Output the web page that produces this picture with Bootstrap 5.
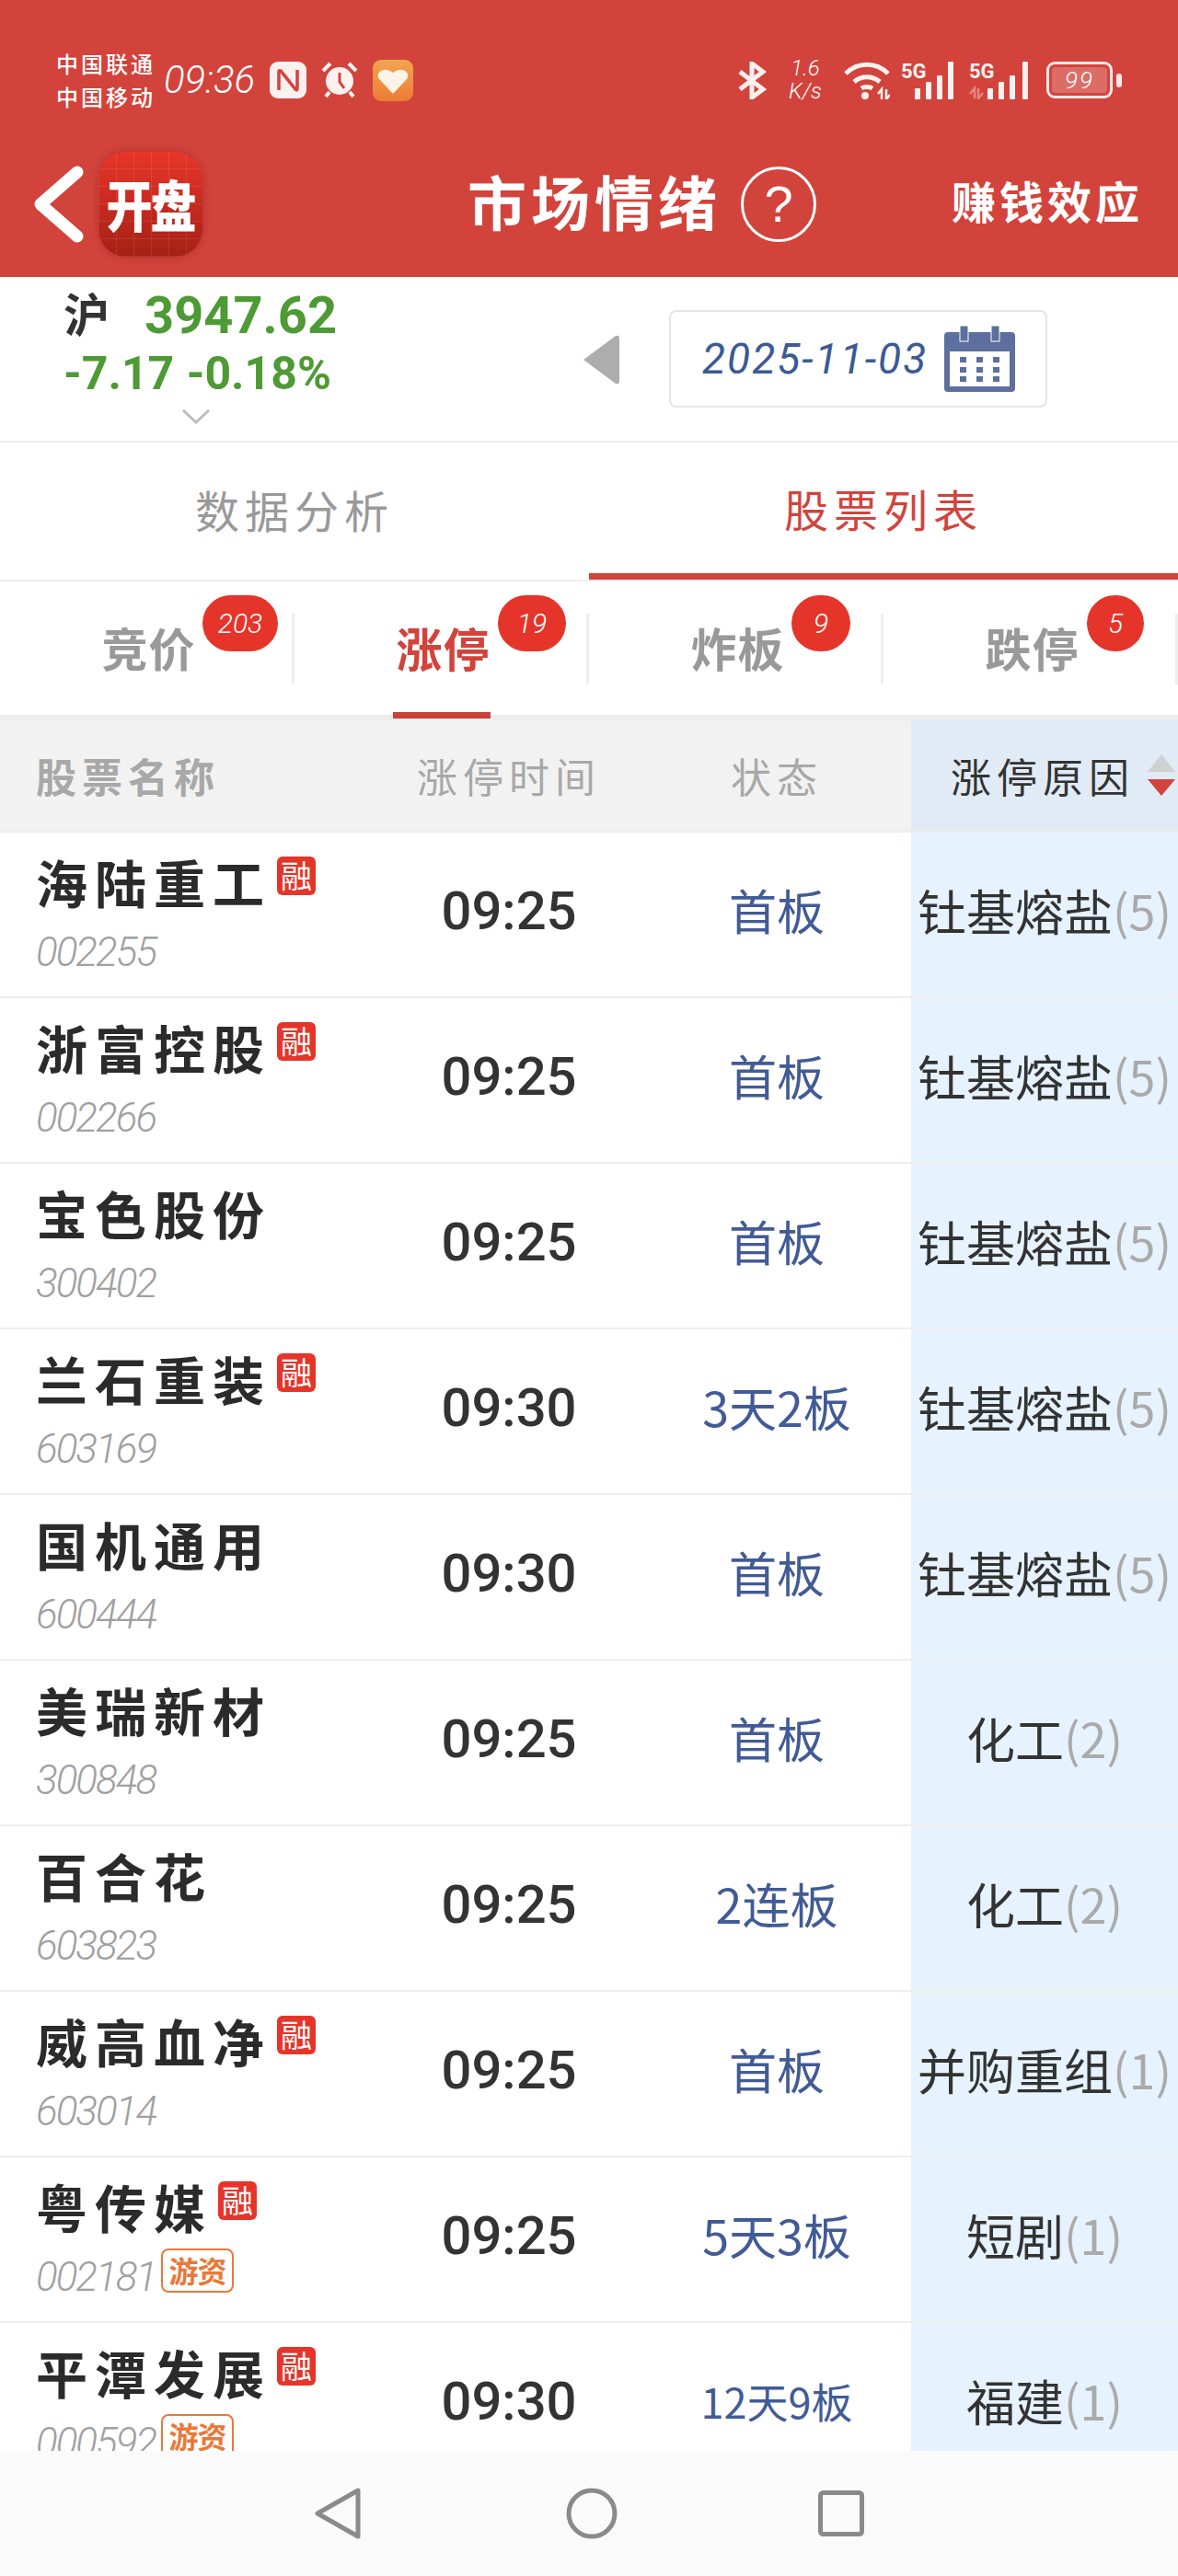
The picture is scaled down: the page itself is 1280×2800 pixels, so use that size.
<!DOCTYPE html>
<html lang="zh-CN">
<head>
    <meta charset="UTF-8">
    <meta name="viewport" content="width=device-width, initial-scale=1.0">
    <title>市场情绪</title>
    <link href="https://cdn.jsdelivr.net/npm/bootstrap@5.3.0/dist/css/bootstrap.min.css" rel="stylesheet">
    <style>
        body { width: 1280px; height: 2800px; overflow: hidden; background: #fff; color: #333; font-family: "Noto Sans CJK SC", "Noto Sans", sans-serif; }
        .top-red { background: #d2433c; color: #fff; height: 301px; }
        .status-bar { height: 124px; padding: 50px 61px 0 61px; }
        .carrier { width: 117px; font-size: 24px; line-height: 36px; letter-spacing: 3px; font-weight: 500; white-space: nowrap; }
        .clock { font-family: Roboto, sans-serif; font-style: italic; font-weight: 300; font-size: 42px; line-height: 1; width: 115px; }
        .speed { font-family: Roboto, sans-serif; font-style: italic; font-weight: 300; font-size: 24px; line-height: 25px; text-align: center; width: 36px; }
        .sig-gap { margin-left: 12px; }
        .batt { width: 72px; height: 40px; border: 3px solid #fde9e7; border-radius: 9px; padding: 3px; }
        .batt-fill { background: rgba(255,255,255,.22); border-radius: 4px; font: italic 300 26px/28px Roboto, sans-serif; text-align: center; height: 100%; letter-spacing: 2px; }
        .batt-nub { width: 6px; height: 15px; background: #fde9e7; border-radius: 3px; margin-left: 4px; }
        .tool-bar { height: 177px; padding: 18px 38px 0 37px; }
        .app-logo { width: 113px; height: 114px; margin-left: 15px; border-radius: 30px; color: #fff; font-size: 50px; font-weight: 900; letter-spacing: -2px; box-shadow: 0 0 10px rgba(120,20,15,.35);
            background: repeating-linear-gradient(90deg, rgba(255,255,255,.09) 0 1px, transparent 1px 19px), repeating-linear-gradient(0deg, rgba(255,255,255,.09) 0 1px, transparent 1px 19px), linear-gradient(#e8352a, #a52015); }
        .app-logo span { display: inline-block; transform: scaleY(1.2); }
        .page-title { margin-left: 288px; padding-bottom: 10px; font-size: 64px; font-weight: 700; letter-spacing: 5px; line-height: 1; width: 271px; white-space: nowrap; }
        .help-circle { width: 82px; height: 82px; margin-left: 26px; border: 3px solid #fff; border-radius: 50%; font: 56px/1 "Liberation Sans", sans-serif; }
        .side-link { font-size: 48px; font-weight: 700; letter-spacing: 4px; line-height: 1; padding-bottom: 10px; }
        .index-row { height: 180px; border-bottom: 2px solid #eee; }
        .index-box { width: 560px; padding: 12px 0 0 69px; position: relative; }
        .index-name { font-size: 50px; font-weight: 700; color: #333; width: 88px; line-height: 52px; }
        .index-val { font: 700 56px/60px Roboto, sans-serif; color: #4e9a35; }
        .index-chg { font: 700 50px/66px Roboto, sans-serif; color: #4e9a35; white-space: nowrap; word-spacing: 1px; }
        .index-arrow { margin: 6px 0 0 129px; display: block; }
        .date-prev { margin: 63px 0 0 72px; }
        .date-box { width: 411px; height: 106px; margin: 36px 0 0 53px; border: 2px solid #e5e5e5; border-radius: 8px; padding-left: 34px; color: #3c5a93; font: italic 400 46px/1 Roboto, sans-serif; letter-spacing: 2px; }
        .main-tabs { height: 151px; border-bottom: 2px solid #eee; }
        .main-tab { width: 640px; height: 149px; font-size: 48px; letter-spacing: 6px; color: #999; padding-bottom: 5px; }
        .main-tab.on { color: #d2433c; border-bottom: 7px solid #d2433c; padding-bottom: 0; }
        .sub-tabs { height: 151px; border-bottom: 6px solid #ececec; }
        .sub-tab { width: 320px; height: 145px; position: relative; }
        .sub-label { width: 100%; height: 77px; border-right: 3px solid #eee; font-size: 50px; font-weight: 700; color: #999; line-height: 72px; text-align: center; padding-left: 6px; letter-spacing: 1px; margin-top: 2px; }
        .sub-tab.on .sub-label { color: #d2433c; }
        .sub-tab.on::after { content: ""; position: absolute; left: 107px; width: 106px; bottom: -4px; height: 7px; background: #c9423a; }
        .count-pill { position: absolute; top: 15px; left: 221px; height: 61px; min-width: 62px; padding: 0 14px; background: #e5352a; border-radius: 31px; color: #fff; font: italic 300 30px/61px Roboto, sans-serif; text-align: center; }
        .grid-head { height: 120px; background: #f2f2f2; color: #a8a8a8; font-size: 44px; letter-spacing: 6px; }
        .c-name { width: 400px; padding-left: 39px; }
        .c-time { width: 306px; text-align: center; }
        .c-state { width: 284px; padding-right: 8px; text-align: center; }
        .c-reason { width: 290px; text-align: center; }
        .grid-head .c-reason { background: #e1ebf6; color: #333; height: 100%; position: relative; padding: 0 4px 0 0; }
        .sort-up, .sort-down { position: absolute; right: 3px; width: 0; height: 0; border-left: 15px solid transparent; border-right: 15px solid transparent; }
        .sort-up { top: 37px; border-bottom: 19px solid #d0d0d0; }
        .sort-down { top: 64px; border-top: 18px solid #d2433c; }
        .stock-list { flex: 1 1 0; min-height: 0; overflow: hidden; }
        .stock-row { height: 180px; border-top: 2px solid #eee; }
        .stock-row > div { height: 100%; }
        .stock-row .c-name { padding-top: 17px; }
        .stock-name { font-size: 56px; font-weight: 700; letter-spacing: 8px; line-height: 72px; color: #2b2b2b; white-space: nowrap; }
        .rong { width: 42px; height: 42px; margin: 9px 0 0 6px; background: #e5352a; color: #fff; border-radius: 6px; font-size: 34px; line-height: 40px; text-align: center; }
        .stock-code { font: italic 300 44px/50px Roboto, sans-serif; letter-spacing: -2px; color: #a0a0a0; margin-top: 16px; }
        .youzi { width: 79px; height: 48px; margin: 10px 0 0 6px; border: 2px solid #e8793a; border-radius: 8px; color: #e8793a; font-size: 32px; font-weight: 700; line-height: 42px; text-align: center; white-space: nowrap; letter-spacing: -1px; }
        .stock-row .c-time { font: 500 58px/1 Roboto, sans-serif; color: #333; padding-bottom: 8px; }
        .stock-row .c-state { color: #425b96; font-size: 52px; line-height: 1; padding-bottom: 10px; }
        .stock-row .c-state.tight { font-size: 45px; }
        .stock-row .c-reason { background: #e6f2fd; font-size: 53px; line-height: 1; white-space: nowrap; padding-bottom: 10px; }
        .stock-row .c-reason i { font-style: normal; color: #aaa; font-size: 52px; }
        .nav-keys { height: 136px; background: #fafafa; flex: none; }
    </style>
    <script src="https://cdn.jsdelivr.net/npm/bootstrap@5.3.0/dist/js/bootstrap.bundle.min.js"></script>
</head>
<body class="d-flex flex-column">
    <div class="top-red flex-shrink-0">
        <div class="status-bar d-flex align-items-center">
            <div class="carrier">中国联通<br>中国移动</div>
            <div class="clock">09:36</div>
            <svg width="40" height="40" viewBox="0 0 40 40"><rect width="40" height="40" rx="9" fill="#fdf1f0"/><path d="M10 31V11q0-2 2-1l16 20q2 2 2-1V9" fill="none" stroke="#d2433c" stroke-width="3.5"/></svg>
            <svg class="ms-3" width="40" height="40" viewBox="0 0 40 40"><circle cx="20" cy="21" r="15" fill="#fdf1f0"/><path d="M20 12v10l5 7" fill="none" stroke="#d2433c" stroke-width="3"/><path d="M2 10 10 2M38 10 30 2M9 33l-4 5M31 33l4 5" stroke="#fdf1f0" stroke-width="4"/></svg>
            <svg class="ms-3" width="44" height="45" viewBox="0 0 44 45"><defs><linearGradient id="appg" x1="0" y1="0" x2="0" y2="1"><stop offset="0" stop-color="#f3a550"/><stop offset="1" stop-color="#ec7b34"/></linearGradient></defs><rect width="44" height="45" rx="9" fill="url(#appg)"/><path d="M22 37 7 21c-5-7 5-15 15-7 10-8 20 0 15 7z" fill="#fdf3e6"/></svg>
            <svg class="ms-auto" width="32" height="41" viewBox="0 0 32 41" fill="none" stroke="#fdf1f0" stroke-width="5"><path d="M3 11l25 19-12 9V2l12 9L3 30"/></svg>
            <div class="speed ms-4">1.6<br>K/s</div>
            <svg class="ms-4" width="50" height="41" viewBox="0 0 50 41" fill="none" stroke="#fdf1f0" stroke-width="5"><path d="M2 13C15 0 35 0 48 13M11 22c8-7 20-7 28 0M19 29c3-2 9-2 12 0"/><circle cx="23" cy="37" r="4" fill="#fdf1f0" stroke="none"/><path d="M37 35l4-5v11M46 30v11l4-5" stroke-width="2.500"/></svg>
            <svg class="sig-gap" width="62" height="42" viewBox="0 0 62 42" fill="#fdf1f0"><text x="0" y="19" font-family="Roboto, sans-serif" font-size="22" font-weight="700">5G</text><rect x="15" y="30" width="6" height="12" rx="1"/><rect x="27" y="23" width="6" height="19" rx="1"/><rect x="39" y="16" width="6" height="26" rx="1"/><rect x="51" y="1" width="6" height="41" rx="1"/></svg>
            <svg class="sig-gap" width="68" height="42" viewBox="0 0 68 42" fill="#fdf1f0"><text x="0" y="19" font-family="Roboto, sans-serif" font-size="22" font-weight="700">5G</text><path d="M1 36l5-6v11M10 30v11l5-6" fill="none" stroke="#fdf1f0" stroke-opacity=".4" stroke-width="2.500"/><rect x="20" y="30" width="6" height="12" rx="1"/><rect x="32" y="23" width="6" height="19" rx="1"/><rect x="44" y="16" width="6" height="26" rx="1"/><rect x="58" y="1" width="6" height="41" rx="1"/></svg>
            <div class="batt ms-3"><div class="batt-fill">99</div></div>
            <div class="batt-nub"></div>
        </div>
        <div class="tool-bar d-flex align-items-center">
            <svg width="55" height="84" viewBox="0 0 55 84" fill="none" stroke="#fff" stroke-width="13" stroke-linecap="round" stroke-linejoin="round"><path d="M47 7 7 42l40 35"/></svg>
            <div class="app-logo d-flex align-items-center justify-content-center flex-shrink-0"><span>开盘</span></div>
            <div class="page-title">市场情绪</div>
            <div class="help-circle d-flex align-items-center justify-content-center flex-shrink-0">?</div>
            <div class="side-link ms-auto">赚钱效应</div>
        </div>
    </div>

    <div class="index-row d-flex flex-shrink-0">
        <div class="index-box">
            <div class="d-flex"><div class="index-name">沪</div><div class="index-val">3947.62</div></div>
            <div class="index-chg">-7.17 -0.18%</div>
            <svg class="index-arrow" width="30" height="16" viewBox="0 0 30 16" fill="none" stroke="#bdbdbd" stroke-width="3"><path d="M1 1l14 13L29 1"/></svg>
        </div>
        <svg class="date-prev" width="42" height="54" viewBox="0 0 42 54"><path d="M2 27 37 1q4-1 4 3v46q0 4-4 3z" fill="#adadad"/></svg>
        <div class="date-box d-flex align-items-center">
            <span style="width:263px">2025-11-03</span>
            <svg width="77" height="72" viewBox="0 0 77 72"><rect y="7" width="77" height="65" rx="4" fill="#5d6f9f"/><rect x="6" y="28" width="65" height="38" fill="#fff"/><rect x="17" y="0" width="9" height="17" fill="#5d6f9f" stroke="#fff"/><rect x="51" y="0" width="9" height="17" fill="#5d6f9f" stroke="#fff"/><g fill="#5d6f9f"><rect x="17" y="34" width="7" height="6"/><rect x="35" y="34" width="7" height="6"/><rect x="53" y="34" width="7" height="6"/><rect x="17" y="45" width="7" height="6"/><rect x="35" y="45" width="7" height="6"/><rect x="53" y="45" width="7" height="6"/><rect x="17" y="55" width="7" height="6"/><rect x="35" y="55" width="7" height="6"/><rect x="53" y="55" width="7" height="6"/></g></svg>
        </div>
    </div>

    <div class="main-tabs d-flex flex-shrink-0">
        <div class="main-tab d-flex align-items-center justify-content-center">数据分析</div>
        <div class="main-tab on d-flex align-items-center justify-content-center">股票列表</div>
    </div>

    <div class="sub-tabs d-flex flex-shrink-0">
        <div class="sub-tab d-flex align-items-center"><div class="sub-label">竞价</div><span class="count-pill" style="left:220px;min-width:82px">203</span></div>
        <div class="sub-tab on d-flex align-items-center"><div class="sub-label">涨停</div><span class="count-pill" style="min-width:74px">19</span></div>
        <div class="sub-tab d-flex align-items-center"><div class="sub-label">炸板</div><span class="count-pill" style="left:220px;min-width:64px">9</span></div>
        <div class="sub-tab d-flex align-items-center"><div class="sub-label">跌停</div><span class="count-pill">5</span></div>
    </div>

    <div class="grid-head d-flex align-items-center flex-shrink-0">
        <div class="c-name fw-bold">股票名称</div>
        <div class="c-time">涨停时间</div>
        <div class="c-state">状态</div>
        <div class="c-reason d-flex align-items-center justify-content-center">涨停原因<span class="sort-up"></span><span class="sort-down"></span></div>
    </div>

    <div class="stock-list">
        <div class="stock-row d-flex">
            <div class="c-name"><div class="d-flex"><span class="stock-name">海陆重工</span><span class="rong">融</span></div><div class="stock-code">002255</div></div>
            <div class="c-time d-flex align-items-center justify-content-center">09:25</div>
            <div class="c-state d-flex align-items-center justify-content-center">首板</div>
            <div class="c-reason d-flex align-items-center justify-content-center">钍基熔盐<i>(5)</i></div>
        </div>
        <div class="stock-row d-flex">
            <div class="c-name"><div class="d-flex"><span class="stock-name">浙富控股</span><span class="rong">融</span></div><div class="stock-code">002266</div></div>
            <div class="c-time d-flex align-items-center justify-content-center">09:25</div>
            <div class="c-state d-flex align-items-center justify-content-center">首板</div>
            <div class="c-reason d-flex align-items-center justify-content-center">钍基熔盐<i>(5)</i></div>
        </div>
        <div class="stock-row d-flex">
            <div class="c-name"><div class="d-flex"><span class="stock-name">宝色股份</span></div><div class="stock-code">300402</div></div>
            <div class="c-time d-flex align-items-center justify-content-center">09:25</div>
            <div class="c-state d-flex align-items-center justify-content-center">首板</div>
            <div class="c-reason d-flex align-items-center justify-content-center">钍基熔盐<i>(5)</i></div>
        </div>
        <div class="stock-row d-flex">
            <div class="c-name"><div class="d-flex"><span class="stock-name">兰石重装</span><span class="rong">融</span></div><div class="stock-code">603169</div></div>
            <div class="c-time d-flex align-items-center justify-content-center">09:30</div>
            <div class="c-state d-flex align-items-center justify-content-center">3天2板</div>
            <div class="c-reason d-flex align-items-center justify-content-center">钍基熔盐<i>(5)</i></div>
        </div>
        <div class="stock-row d-flex">
            <div class="c-name"><div class="d-flex"><span class="stock-name">国机通用</span></div><div class="stock-code">600444</div></div>
            <div class="c-time d-flex align-items-center justify-content-center">09:30</div>
            <div class="c-state d-flex align-items-center justify-content-center">首板</div>
            <div class="c-reason d-flex align-items-center justify-content-center">钍基熔盐<i>(5)</i></div>
        </div>
        <div class="stock-row d-flex">
            <div class="c-name"><div class="d-flex"><span class="stock-name">美瑞新材</span></div><div class="stock-code">300848</div></div>
            <div class="c-time d-flex align-items-center justify-content-center">09:25</div>
            <div class="c-state d-flex align-items-center justify-content-center">首板</div>
            <div class="c-reason d-flex align-items-center justify-content-center">化工<i>(2)</i></div>
        </div>
        <div class="stock-row d-flex">
            <div class="c-name"><div class="d-flex"><span class="stock-name">百合花</span></div><div class="stock-code">603823</div></div>
            <div class="c-time d-flex align-items-center justify-content-center">09:25</div>
            <div class="c-state d-flex align-items-center justify-content-center">2连板</div>
            <div class="c-reason d-flex align-items-center justify-content-center">化工<i>(2)</i></div>
        </div>
        <div class="stock-row d-flex">
            <div class="c-name"><div class="d-flex"><span class="stock-name">威高血净</span><span class="rong">融</span></div><div class="stock-code">603014</div></div>
            <div class="c-time d-flex align-items-center justify-content-center">09:25</div>
            <div class="c-state d-flex align-items-center justify-content-center">首板</div>
            <div class="c-reason d-flex align-items-center justify-content-center">并购重组<i>(1)</i></div>
        </div>
        <div class="stock-row d-flex">
            <div class="c-name"><div class="d-flex"><span class="stock-name">粤传媒</span><span class="rong">融</span></div><div class="d-flex"><span class="stock-code">002181</span><span class="youzi">游资</span></div></div>
            <div class="c-time d-flex align-items-center justify-content-center">09:25</div>
            <div class="c-state d-flex align-items-center justify-content-center">5天3板</div>
            <div class="c-reason d-flex align-items-center justify-content-center">短剧<i>(1)</i></div>
        </div>
        <div class="stock-row d-flex">
            <div class="c-name"><div class="d-flex"><span class="stock-name">平潭发展</span><span class="rong">融</span></div><div class="d-flex"><span class="stock-code">000592</span><span class="youzi">游资</span></div></div>
            <div class="c-time d-flex align-items-center justify-content-center">09:30</div>
            <div class="c-state tight d-flex align-items-center justify-content-center">12天9板</div>
            <div class="c-reason d-flex align-items-center justify-content-center">福建<i>(1)</i></div>
        </div>
    </div>

    <div class="nav-keys d-flex align-items-center justify-content-center">
        <svg width="50" height="56" viewBox="0 0 50 56" fill="none" stroke="#8a8a8a" stroke-width="5" stroke-linejoin="round"><path d="M3 28 47 3v50z"/></svg>
        <svg style="margin-left:223px" width="56" height="56" viewBox="0 0 56 56" fill="none" stroke="#8a8a8a" stroke-width="5"><circle cx="28" cy="28" r="25"/></svg>
        <svg style="margin-left:218px" width="50" height="50" viewBox="0 0 50 50" fill="none" stroke="#8a8a8a" stroke-width="5" stroke-linejoin="round"><rect x="2.500" y="2.500" width="45" height="45" rx="3"/></svg>
    </div>
</body>
</html>
